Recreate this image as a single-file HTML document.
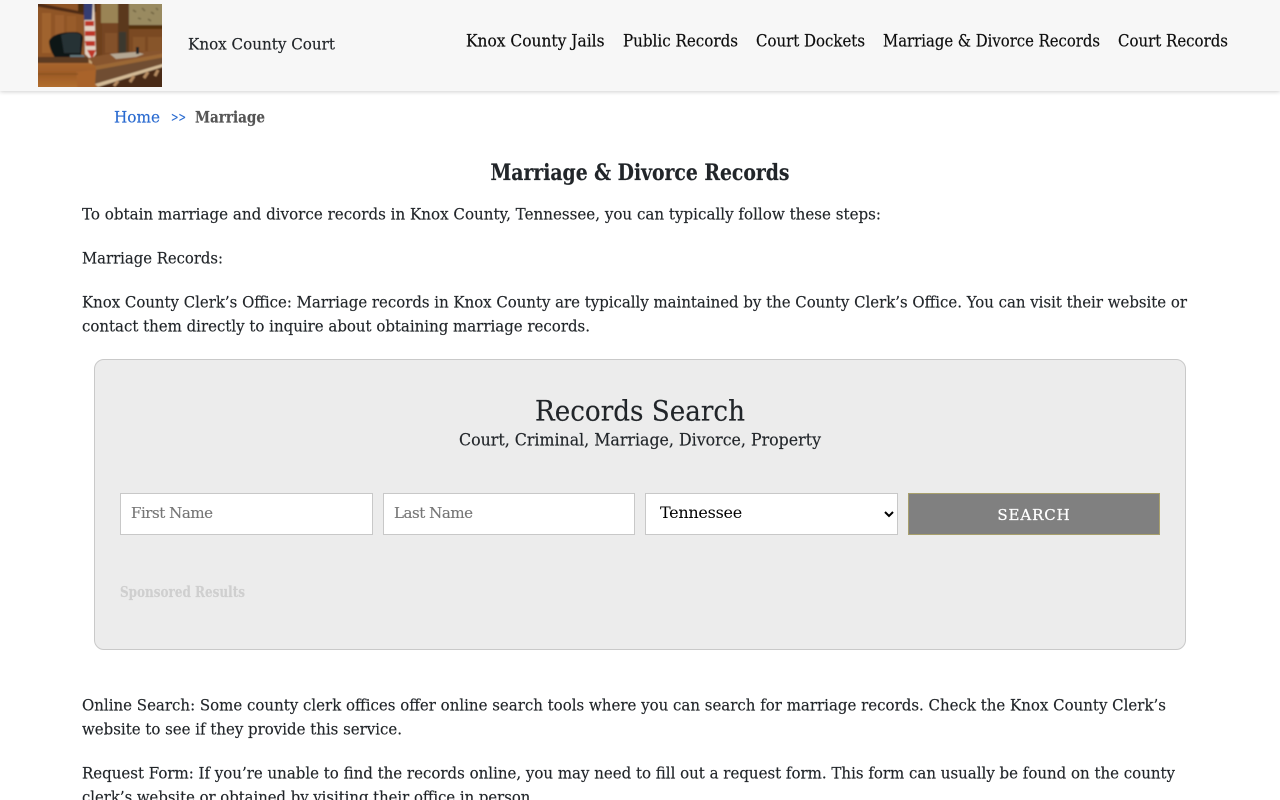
<!DOCTYPE html>
<html lang="en">
<head>
<meta charset="utf-8">
<title>Marriage &amp; Divorce Records - Knox County Court</title>
<style>
html,body{margin:0;padding:0;background:#fff;}
body{width:1280px;height:800px;overflow:hidden;position:relative;font-family:"DejaVu Serif","Liberation Serif",serif;}
header{position:absolute;left:0;top:0;width:1280px;height:91px;background:#f7f7f7;box-shadow:0 1px 4px rgba(0,0,0,.18);}
.box{position:absolute;left:94px;top:359px;width:1090px;height:289px;background:#ececec;border:1px solid #c9c9c9;border-radius:10px;}
input,select{position:absolute;top:493px;height:42px;box-sizing:border-box;background:#fff;border:1px solid #c8c8c8;font-family:"DejaVu Serif","Liberation Serif",serif;font-size:15px;border-radius:0;outline:none;margin:0;}
input{padding:0 10px 2px;letter-spacing:-.45px;-webkit-text-stroke:.12px currentColor;}
input::placeholder{color:#757575;opacity:1;}
#fn{left:120px;width:253px;}
#ln{left:383px;width:252px;}
#st{left:645px;width:253px;padding:0 0 4px 10px;color:#000;font-size:16px;letter-spacing:-.27px;}
button{position:absolute;left:908px;top:493px;width:252px;height:42px;box-sizing:border-box;background:#808080;border:1px solid #a8a06c;color:#fff;font-family:"DejaVu Serif","Liberation Serif",serif;font-size:15px;letter-spacing:.9px;padding:1px 0 0;margin:0;-webkit-text-stroke:.25px #fff;}
svg.t{position:absolute;left:0;top:0;pointer-events:none;}
svg.t text{font-family:"DejaVu Serif","Liberation Serif",serif;font-size:16px;fill:currentColor;stroke:currentColor;stroke-width:.16px;color:#212529;}
svg.t text.n{color:#0d0d0d;font-size:16.500px;stroke-width:.2px;}
</style>
</head>
<body>
<header></header>

<svg style="position:absolute;left:38px;top:4px" width="124" height="83" viewBox="0 0 124 83">
  <defs>
    <filter id="b" x="-5%" y="-5%" width="110%" height="110%"><feGaussianBlur stdDeviation=".9"/></filter>
    <linearGradient id="d" x1="0" y1="0" x2="0" y2="1"><stop offset="0" stop-color="#a8662e"/><stop offset=".4" stop-color="#9d5a26"/><stop offset="1" stop-color="#b87430"/></linearGradient>
    <clipPath id="c"><rect width="124" height="83"/></clipPath>
  </defs>
  <g clip-path="url(#c)"><g filter="url(#b)">
    <rect x="-4" y="-4" width="132" height="91" fill="#85502a"/>
    <rect x="-4" y="-4" width="50" height="58" fill="#8f5527"/>
    <rect x="4" y="9" width="9" height="40" fill="#a0632e"/>
    <rect x="17" y="11" width="9" height="38" fill="#9c5f2e"/>
    <rect x="29" y="12" width="9" height="20" fill="#985b2b"/>
    <path d="M-4 -2L46 8V11L-4 2Z" fill="#4e2c14"/>
    <rect x="40" y="-4" width="24" height="12" fill="#46290f"/>
    <rect x="58" y="-4" width="6" height="60" fill="#6e401d"/>
    <rect x="63" y="-4" width="18" height="23" fill="#9a8454"/>
    <rect x="80" y="-4" width="11" height="56" fill="#5a371a"/>
    <rect x="91" y="-4" width="37" height="25" fill="#998a60"/>
    <path d="M95 6l3 2M104 4l3 3M113 8l3 2M100 14l3 1M110 15l3 2M118 4l2 2" stroke="#6e6240" stroke-width="1.400"/>
    <rect x="91" y="21" width="37" height="4" fill="#54300f"/>
    <rect x="91" y="25" width="37" height="30" fill="#7a4824"/>
    <rect x="95" y="33" width="12" height="14" fill="#87542c"/>
    <rect x="110" y="33" width="14" height="14" fill="#87542c"/>
    <rect x="64" y="19" width="16" height="33" fill="#754423"/>
    <rect x="67" y="29" width="12" height="20" fill="#83512c"/>
    <rect x="81" y="28" width="7" height="23" fill="#3a372e"/>
    <path d="M46 -4H56L58 50L53 56L47 50Z" fill="#e2d2c2"/>
    <path d="M46 -4H55L54 16H46Z" fill="#343c72"/>
    <path d="M47 17H56V22H47ZM47 27H57V32H47ZM47 37H57V42H48ZM49 46H58L54 55Z" fill="#bf3427"/>
    <rect x="51" y="54" width="3" height="8" fill="#c9a878"/>
    <path d="M11 37C14 30 26 28 36 28C42 28 45 30 45 34L43 54L40 59H21C15 52 11 44 11 37Z" fill="#0f1415"/>
    <path d="M23 31C30 28 40 28 43 31L42 49H26Z" fill="#253236"/>
    <path d="M32 51H46L48 58H32Z" fill="#62767c"/>
    <rect x="-4" y="53" width="54" height="6" fill="#5c3a20"/>
    <path d="M50 54L70 50L128 46V54L58 62Z" fill="#87542e"/>
    <path d="M72 50L98 48L106 50L98 53L78 55Z" fill="#b5a894"/>
    <rect x="98" y="43" width="3" height="7" fill="#1c2228"/>
    <path d="M-4 59H52L58 62C60 70 59 87 57 87H-4Z" fill="url(#d)"/>
    <path d="M38 68C46 67 54 66 58 66L58 87H40Z" fill="#a9642a"/>
    <path d="M-4 69H40V71H-4Z" fill="#8a5124" opacity=".7"/>
    <path d="M57 62L128 49V53L58 66Z" fill="#9b6836"/>
    <path d="M58 66L128 53V60L57 80Z" fill="#6f4e33"/>
    <path d="M57 80L128 59V62L60 83Z" fill="#d4bb96"/>
    <path d="M60 83L128 62V87H60Z" fill="#4a2a14"/>
    <path d="M76 82L80 77M92 78L96 72M106 74L110 68M117 72L120 66" stroke="#b58a60" stroke-width="3"/>
  </g></g>
</svg>

<div class="box"></div>
<input id="fn" type="text" placeholder="First Name">
<input id="ln" type="text" placeholder="Last Name">
<select id="st"><option>Tennessee</option></select>
<button type="button">SEARCH</button>

<svg class="t" width="1280" height="800" viewBox="0 0 1280 800">
  <text x="188" y="49.500" textLength="147" lengthAdjust="spacingAndGlyphs">Knox County Court</text>

  <text class="n" x="466" y="46.500" textLength="138.500" lengthAdjust="spacingAndGlyphs">Knox County Jails</text>
  <text class="n" x="623" y="46.500" textLength="115" lengthAdjust="spacingAndGlyphs">Public Records</text>
  <text class="n" x="756" y="46.500" textLength="109" lengthAdjust="spacingAndGlyphs">Court Dockets</text>
  <text class="n" x="883" y="46.500" textLength="217" lengthAdjust="spacingAndGlyphs">Marriage &amp; Divorce Records</text>
  <text class="n" x="1118" y="46.500" textLength="110" lengthAdjust="spacingAndGlyphs">Court Records</text>

  <text x="114" y="122.500" textLength="46" lengthAdjust="spacingAndGlyphs" style="color:#2a6bd0">Home</text>
  <text x="171" y="121.500" textLength="15" lengthAdjust="spacingAndGlyphs" style="color:#2a6bd0;font-size:13px">&gt;&gt;</text>
  <text x="195" y="122.500" textLength="70" lengthAdjust="spacingAndGlyphs" style="color:#555;font-weight:700">Marriage</text>

  <text x="490.500" y="180" textLength="299" lengthAdjust="spacingAndGlyphs" style="font-size:22px;font-weight:700">Marriage &amp; Divorce Records</text>

  <text x="82" y="219.500" textLength="799" lengthAdjust="spacingAndGlyphs">To obtain marriage and divorce records in Knox County, Tennessee, you can typically follow these steps:</text>
  <text x="82" y="263.500" textLength="141" lengthAdjust="spacingAndGlyphs">Marriage Records:</text>
  <text x="82" y="307.500" textLength="1105" lengthAdjust="spacingAndGlyphs">Knox County Clerk’s Office: Marriage records in Knox County are typically maintained by the County Clerk’s Office. You can visit their website or</text>
  <text x="82" y="331.500" textLength="508" lengthAdjust="spacingAndGlyphs">contact them directly to inquire about obtaining marriage records.</text>

  <text x="535" y="420.500" textLength="210" lengthAdjust="spacingAndGlyphs" style="font-size:28px">Records Search</text>
  <text x="459" y="445.500" textLength="362" lengthAdjust="spacingAndGlyphs" style="font-size:16.500px">Court, Criminal, Marriage, Divorce, Property</text>

  <text x="120" y="597" textLength="125" lengthAdjust="spacingAndGlyphs" style="color:#cfcfcf;font-size:14.500px;font-weight:700">Sponsored Results</text>

  <text x="82" y="710.500" textLength="1084" lengthAdjust="spacingAndGlyphs">Online Search: Some county clerk offices offer online search tools where you can search for marriage records. Check the Knox County Clerk’s</text>
  <text x="82" y="734.500" textLength="320" lengthAdjust="spacingAndGlyphs">website to see if they provide this service.</text>
  <text x="82" y="778.500" textLength="1093" lengthAdjust="spacingAndGlyphs">Request Form: If you’re unable to find the records online, you may need to fill out a request form. This form can usually be found on the county</text>
  <text x="82" y="802.500" textLength="453" lengthAdjust="spacingAndGlyphs">clerk’s website or obtained by visiting their office in person.</text>
</svg>
</body>
</html>
